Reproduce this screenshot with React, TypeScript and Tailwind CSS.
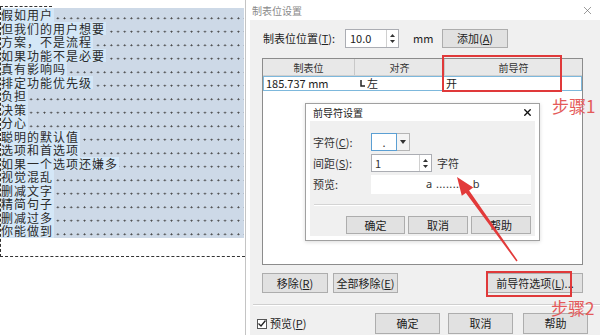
import { X } from "lucide-react";

const docLines = [
  "假如用户",
  "但我们的用户想要",
  "方案，不是流程",
  "如果功能不是必要",
  "真有影响吗",
  "排定功能优先级",
  "负担",
  "决策",
  "分心",
  "聪明的默认值",
  "选项和首选项",
  "如果一个选项还嫌多",
  "视觉混乱",
  "删减文字",
  "精简句子",
  "删减过多",
  "你能做到",
];

function DocPane() {
  return (
    <div className="w-[245px] shrink-0 bg-white pt-[6px]">
      <div className="h-0 w-[52px] border-t border-dashed border-[#333]" />
      <div className="h-[250px] w-[245px] border-b border-l border-dashed border-[#333] pt-px">
        {docLines.map((line, idx) => (
          <div
            key={`line-${idx}`}
            className="flex h-[13.5px] w-[243px] bg-[#cdd9e7] bg-[radial-gradient(circle_at_50%_74%,#4a4a4a_0.7px,transparent_1.3px)] bg-[length:6.7px_100%]"
          >
            <span className="h-full bg-[#d4e7f7] pr-[1px] font-['Noto_Sans_CJK_SC',serif] text-[12px] leading-[13.5px] tracking-[1px] text-[#2b2b2b]">
              {line}
            </span>
          </div>
        ))}
      </div>
    </div>
  );
}

function WinButton({
  children,
  className = "",
}: {
  children: React.ReactNode;
  className?: string;
}) {
  return (
    <div
      className={`flex h-full items-center justify-center border border-[#adadad] bg-[#e1e1e1] text-[11px] text-[#222] ${className}`}
    >
      {children}
    </div>
  );
}

function Spinner() {
  return (
    <div className="flex h-full w-[12px] flex-col items-center justify-center gap-[3px] border-l border-[#d0d0d0] bg-white">
      <svg width="5" height="3" viewBox="0 0 5 3">
        <path d="M0 3 L2.5 0 L5 3 Z" fill="#333" />
      </svg>
      <svg width="5" height="3" viewBox="0 0 5 3">
        <path d="M0 0 L2.5 3 L5 0 Z" fill="#333" />
      </svg>
    </div>
  );
}

function TabDialog() {
  return (
    <div className="flex h-[335px] flex-1 flex-col border-l border-[#c4c4c4] bg-white">
      <div className="flex h-[20px] items-center justify-between pl-[6px] pr-[6px]">
        <span className="text-[10px] text-[#8a8a8a]">制表位设置</span>
        <X size={13} strokeWidth={1.2} className="text-[#666]" />
      </div>
      <div className="ml-[4px] flex flex-1 flex-col bg-[#f0f0f0]">
        <div className="mt-[9px] flex h-[19px] items-center pl-[13px]">
          <span className="w-[82px] text-[11px] text-[#222]">
            制表位位置(<u>T</u>):
          </span>
          <div className="flex h-full w-[54px] border border-[#abadb3] bg-white">
            <span className="flex-1 pl-[4px] text-[11px] leading-[17px] text-[#222]">
              10.0
            </span>
            <Spinner />
          </div>
          <span className="w-[43px] pl-[14px] text-[11px] text-[#222]">mm</span>
          <WinButton className="w-[66px]">
            添加(<u>A</u>)
          </WinButton>
        </div>

        <div className="ml-[12px] mt-[10px] flex h-[207px] w-[321px] flex-col border border-[#8c8c8c] bg-white">
          <div className="flex h-[17px] border-b border-[#d0d0d0] bg-[#e8e8e8] text-[10px] text-[#333]">
            <div className="flex w-[92px] items-center justify-center border-r border-[#c8c8c8]">
              制表位
            </div>
            <div className="flex w-[90px] items-center justify-center border-r border-[#c8c8c8]">
              对齐
            </div>
            <div className="flex flex-1 items-center justify-center">前导符</div>
          </div>
          <div className="flex h-[15px] items-center border border-[#7db8dc] text-[11px] text-[#222]">
            <span className="w-[96px] pl-[2px]">185.737 mm</span>
            <span className="flex w-[86px] items-center gap-[1px]">
              <svg width="6" height="7" viewBox="0 0 6 7">
                <path d="M1 0 V6 H5" stroke="#222" strokeWidth="1.5" fill="none" />
              </svg>
              左
            </span>
            <span>开</span>
          </div>
        </div>

        <div className="mt-[8px] flex h-[20px] pl-[12px] pr-[17px]">
          <WinButton className="w-[66px]">
            移除(<u>R</u>)
          </WinButton>
          <WinButton className="ml-[5px] w-[65px]">
            全部移除(<u>E</u>)
          </WinButton>
          <WinButton className="ml-auto w-[96px]">
            前导符选项(<u>L</u>)...
          </WinButton>
        </div>

        <div className="ml-[3px] mt-[11px] h-[2px] border-b border-t border-b-white border-t-[#cfcfcf]" />

        <div className="mt-[7px] flex h-[21px] items-center pl-[7px]">
          <div className="flex w-[118px] items-center gap-[3px] text-[11px] text-[#222]">
            <div className="flex h-[10px] w-[10px] items-center justify-center border border-[#555] bg-white">
              <svg width="8" height="7" viewBox="0 0 8 7">
                <path d="M0.5 3.5 L3 6 L7.5 0.5" stroke="#222" strokeWidth="1.3" fill="none" />
              </svg>
            </div>
            <span>
              预览(<u>P</u>)
            </span>
          </div>
          <WinButton className="w-[65px]">确定</WinButton>
          <WinButton className="ml-[8px] w-[65px]">取消</WinButton>
          <WinButton className="ml-[10px] w-[65px]">帮助</WinButton>
        </div>
      </div>
    </div>
  );
}

function LeaderDialog() {
  return (
    <div className="absolute left-[305px] top-[103px] flex h-[138px] w-[235px] flex-col border border-[#a0a0a0] bg-white shadow-[0_1px_4px_rgba(0,0,0,0.15)]">
      <div className="flex h-[17px] items-center justify-between pl-[7px] pr-[6px]">
        <span className="text-[10px] text-[#222]">前导符设置</span>
        <X size={11} strokeWidth={3} className="text-[#111]" />
      </div>
      <div className="mx-[4px] mb-[4px] flex flex-1 flex-col bg-[#f0f0f0] pl-[3px] text-[11px] text-[#333]">
        <div className="mt-[12px] flex h-[18px] items-center">
          <span className="w-[58px]">
            字符(<u>C</u>):
          </span>
          <div className="flex h-full w-[39px] bg-white">
            <div className="flex w-[26px] items-center justify-center border border-[#5b9fd3] leading-none">
              .
            </div>
            <div className="flex flex-1 items-center justify-center border-y border-r border-[#b5b5b5] bg-[#f4f4f4]">
              <svg width="6" height="4" viewBox="0 0 6 4">
                <path d="M0 0 L3 4 L6 0 Z" fill="#333" />
              </svg>
            </div>
          </div>
        </div>
        <div className="mt-[3px] flex h-[18px] items-center">
          <span className="w-[58px]">
            间距(<u>S</u>):
          </span>
          <div className="flex h-full w-[61px] border border-[#abadb3] bg-white">
            <span className="flex-1 pl-[3px] leading-[16px]">1</span>
            <Spinner />
          </div>
          <span className="ml-[5px]">字符</span>
        </div>
        <div className="mt-[3px] flex h-[19px] items-center">
          <span className="w-[58px]">预览:</span>
          <div className="flex h-full w-[160px] items-center justify-center bg-white pl-[4px] font-['Noto_Sans',sans-serif] text-[11px] tracking-[0.4px] text-[#333]">
            a ...........b
          </div>
        </div>
        <div className="ml-[1px] mr-[4px] mt-[10px] h-[2px] border-b border-t border-b-white border-t-[#d4d4d4]" />
        <div className="mt-[10px] flex h-[18px] justify-end gap-[3px] pr-[4px]">
          <WinButton className="w-[59px]">确定</WinButton>
          <WinButton className="w-[60px]">取消</WinButton>
          <WinButton className="w-[60px]">帮助</WinButton>
        </div>
      </div>
    </div>
  );
}

export default function App() {
  return (
    <div className="relative flex h-[335px] w-[600px] overflow-hidden bg-white font-['Noto_Sans_CJK_SC','Noto_Sans',sans-serif]">
      <DocPane />
      <TabDialog />
      <LeaderDialog />

      {/* annotations */}
      <div className="absolute left-[442px] top-[55px] h-[37px] w-[120px] border-2 border-[#e0393a]" />
      <div className="absolute left-[486px] top-[271px] h-[26px] w-[86px] border-2 border-[#e0393a]" />
      <span className="absolute left-[552px] top-[95px] text-[17px] leading-[22px] text-[#e45a5a]">
        步骤1
      </span>
      <span className="absolute left-[551px] top-[297px] text-[17px] leading-[22px] text-[#e45a5a]">
        步骤2
      </span>
      <svg
        className="pointer-events-none absolute left-0 top-0"
        width="600"
        height="335"
        viewBox="0 0 600 335"
      >
        <polygon
          points="457,177 473.2,187.6 469.1,190.5 517.6,260.5 516.4,261.5 465.9,192.9 461.8,195.8"
          fill="#e23a3a"
        />
      </svg>
    </div>
  );
}
